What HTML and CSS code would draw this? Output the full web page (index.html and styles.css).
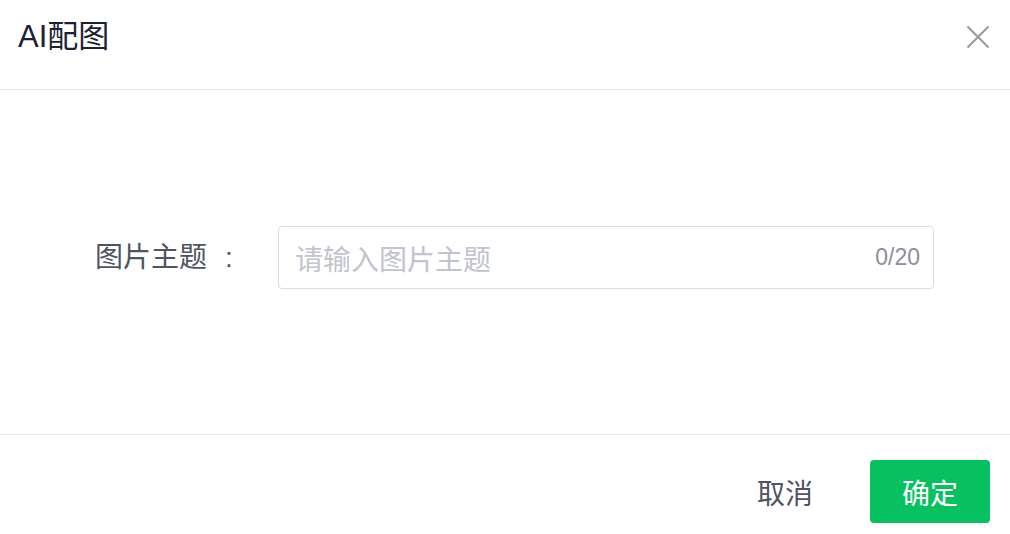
FILE: index.html
```html
<!DOCTYPE html>
<html lang="zh">
<head>
<meta charset="utf-8">
<link rel="stylesheet" href="styles.css">
</head>
<body>
<div class="dialog">
  <div class="dialog-header">
    <div class="dialog-title">AI配图</div>
    <button class="close-btn" aria-label="关闭">
      <svg width="24" height="24" viewBox="0 0 24 24"><path d="M1.5 1.5 L22.5 22.5 M22.5 1.5 L1.5 22.5" stroke="#999999" stroke-width="2" fill="none"/></svg>
    </button>
  </div>
  <div class="dialog-body">
    <div class="form-row">
      <label class="form-label">图片主题<span class="colon">:</span></label>
      <div class="input-wrap">
        <span class="placeholder">请输入图片主题</span>
        <span class="counter">0/20</span>
      </div>
    </div>
  </div>
  <div class="dialog-footer">
    <button class="btn btn-cancel">取消</button>
    <button class="btn btn-primary">确定</button>
  </div>
</div>
</body>
</html>
```

FILE: styles.css
```css
html, body {
  margin: 0;
  padding: 0;
  background: #ffffff;
}
body {
  font-family: "Liberation Sans", "Noto Sans CJK SC", sans-serif;
}
.dialog {
  width: 1010px;
  height: 534px;
  overflow: hidden;
  background: #fff;
}
.dialog-header {
  box-sizing: border-box;
  height: 90px;
  padding: 16px 20px 0 18px;
  border-bottom: 1px solid #e6e6e6;
  display: flex;
  justify-content: space-between;
  align-items: flex-start;
}
.dialog-title {
  font-size: 31px;
  line-height: 42px;
  color: #1c2133;
}
.close-btn {
  margin-top: 9px;
  width: 24px;
  height: 24px;
  padding: 0;
  border: none;
  background: none;
  display: flex;
}
.dialog-body {
  box-sizing: border-box;
  height: 345px;
  padding: 136px 0 0 95px;
  border-bottom: 1px solid #e6e6e6;
}
.form-row {
  display: flex;
  align-items: center;
}
.form-label {
  width: 183px;
  font-size: 28px;
  color: #4e5461;
  line-height: 40px;
}
.colon {
  margin-left: 18px;
}
.input-wrap {
  box-sizing: border-box;
  width: 656px;
  height: 63px;
  border: 1px solid #dcdcdc;
  border-radius: 4px;
  display: flex;
  align-items: center;
  justify-content: space-between;
  padding: 0 13px 0 16px;
}
.placeholder {
  font-size: 28px;
  color: #c0c4cc;
}
.counter {
  font-size: 23px;
  color: #8a8f99;
}
.dialog-footer {
  display: flex;
  justify-content: flex-end;
  padding: 25px 20px 0 0;
}
.btn {
  font-family: "Liberation Sans", "Noto Sans CJK SC", sans-serif;
  width: 120px;
  height: 63px;
  font-size: 28px;
  border: none;
  border-radius: 4px;
  padding: 0;
  cursor: pointer;
}
.btn-cancel {
  background: #ffffff;
  color: #4e5461;
  margin-right: 25px;
}
.btn-primary {
  background: #07c160;
  color: #ffffff;
}
```
